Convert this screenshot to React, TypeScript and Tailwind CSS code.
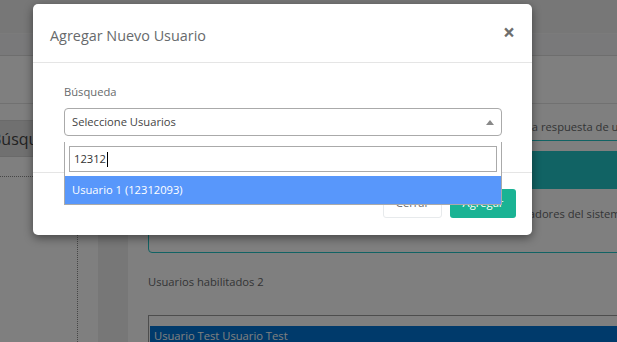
import React from 'react';

export default function App() {
  return (
    <div className="relative h-[342px] w-[617px] overflow-hidden bg-white font-['Open_Sans',sans-serif] text-[11.2px] text-[#676a6c]">
      {/* Page behind the modal */}
      <div className="flex h-full flex-col">
        <div className="h-[34px] shrink-0 border-b border-[#f7f7f7] bg-[#eeeeee]" />
        <div className="h-[22px] shrink-0 border-b border-[#dcdcdc] bg-[#f3f3f4]" />
        <div className="h-[48px] shrink-0 border-b border-[#e2e2e2] bg-white" />

        <div className="flex min-h-0 flex-1">
          <div className="w-[78px] shrink-0 border-r border-dotted border-[#8c8c8c]">
            <div className="ml-[-15px] mt-[16px] flex h-[37px] w-[68px] items-center border border-[#d4d4d4] bg-[#e0e0e0] pl-[5px] text-[16px] text-[#444]">
              Búsqueda
            </div>
            <div className="mt-[19px] border-t border-dotted border-[#8c8c8c]" />
          </div>
          <div className="w-[20px] shrink-0" />
          <div className="w-[30px] shrink-0 bg-[#eeeeee]" />

          <div className="min-w-0 flex-1 pl-[20px] pt-[15px]">
            <p className="whitespace-nowrap leading-[16px] text-[#676a6c]">
              <span className="inline-block w-[381px] overflow-hidden align-top">
                Seleccione los usuarios que podrán visualizar y editar
              </span>
              la respuesta de un usuario
            </p>

            <div className="mt-[5px] w-[520px] rounded-[4px] border border-[#23c6c8] pb-[30px] pl-[15px] pt-[10px]">
              <div className="h-[38px] bg-[#23c6c8]" />
              <p className="mt-[17px] whitespace-nowrap leading-[16px]">
                <span className="inline-block w-[315px] overflow-hidden align-top">
                  Esta opción solo está disponible para los
                </span>
                administradores del sistema
              </p>
            </div>

            <p className="mt-[21px] leading-[16px]">Usuarios habilitados 2</p>

            <div className="mt-[25px] w-[520px] border border-[#9a9a9a] pl-[1px] pt-[10px]">
              <div className="flex h-[20px] items-center bg-[#0074d6] pl-[4px] text-white">
                Usuario Test Usuario Test
              </div>
              <div className="h-[20px]" />
            </div>
          </div>
        </div>
      </div>

      {/* Backdrop */}
      <div className="absolute inset-0 bg-black/50" />

      {/* Modal */}
      <div className="absolute left-[33px] top-[4px] w-[499px] rounded-[5px] bg-white shadow-[0_3px_10px_rgba(0,0,0,0.45)]">
        <div className="flex h-[59px] items-start justify-between border-b border-[#e5e5e5] px-[17px]">
          <h4 className="mt-[22px] text-[14.4px] leading-[20px] text-[#676a6c]">Agregar Nuevo Usuario</h4>
          <span className="mt-[18px] text-[21px] font-bold leading-[21px] text-[#6e6e6e]">×</span>
        </div>

        <div className="pb-[36px] pl-[31px] pr-[30px] pt-[21px]">
          <label className="mb-[8px] block leading-[16px] text-[#676a6c]">Búsqueda</label>
          <div className="relative">
            <div className="flex h-[28px] items-center justify-between rounded-[4px] border border-[#aaaaaa] pl-[7px] pr-[7px] text-[#444]">
              <span>Seleccione Usuarios</span>
              <span className="h-0 w-0 border-x-[4px] border-b-[5px] border-x-transparent border-b-[#888]" />
            </div>

            {/* Open dropdown */}
            <div className="absolute left-0 right-0 top-[34px] z-10 border border-t-0 border-[#aaaaaa] bg-white">
              <div className="p-[4px]">
                <div className="flex h-[26px] items-center border border-[#aaaaaa] pl-[4px] text-[#333]">
                  <span>12312</span>
                  <span className="ml-[1px] h-[15px] w-px bg-black" />
                </div>
              </div>
              <div className="flex h-[28px] items-center bg-[#5897fb] pl-[7px] text-white">
                Usuario 1 (12312093)
              </div>
            </div>
          </div>
        </div>

        <div className="flex justify-end gap-[8px] border-t border-[#e5e5e5] pb-[17px] pr-[16px] pt-[16px]">
          <button className="h-[29px] w-[59px] rounded-[3px] border border-[#e7eaec] bg-white text-[#676a6c]">
            Cerrar
          </button>
          <button className="h-[29px] w-[66px] rounded-[3px] bg-[#1ab394] text-white">Agregar</button>
        </div>
      </div>
    </div>
  );
}
